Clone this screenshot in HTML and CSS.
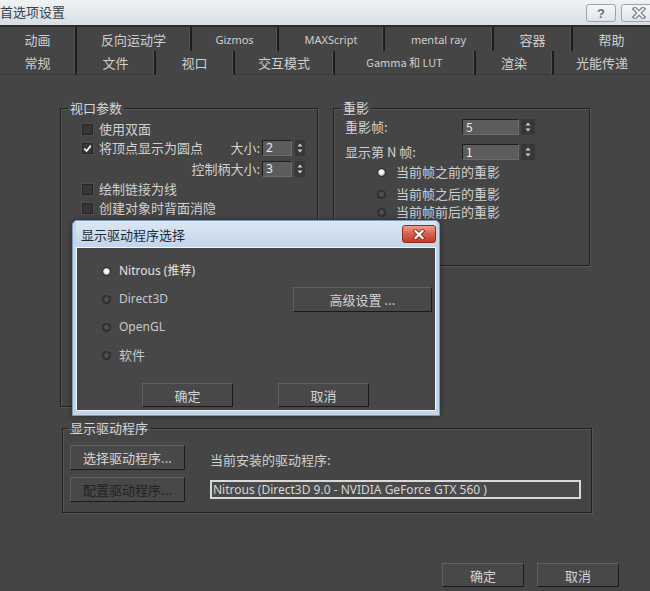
FILE: index.html
```html
<!DOCTYPE html>
<html lang="zh-CN">
<head>
<meta charset="utf-8">
<title>首选项设置</title>
<link rel="stylesheet" href="styles.css">
</head>
<body>
<div class="window">
  <header class="titlebar">
    <span class="title">首选项设置</span>
    <div class="tb-btns">
      <span class="tb-btn">?</span>
      <span class="tb-btn tb-close"><svg width="14" height="12" viewBox="0 0 14 12"><path d="M3 2L11 10M11 2L3 10" stroke="#7a8088" stroke-width="4.5" stroke-linecap="square"/><path d="M3 2L11 10M11 2L3 10" stroke="#f1f3f5" stroke-width="2" stroke-linecap="square"/></svg></span>
    </div>
  </header>

  <nav class="tabs">
    <div class="tabrow row1">
      <span class="tab">动画</span>
      <span class="tab">反向运动学</span>
      <span class="tab latin">Gizmos</span>
      <span class="tab latin">MAXScript</span>
      <span class="tab latin">mental ray</span>
      <span class="tab">容器</span>
      <span class="tab">帮助</span>
    </div>
    <div class="tabrow row2">
      <span class="tab">常规</span>
      <span class="tab">文件</span>
      <span class="tab active">视口</span>
      <span class="tab">交互模式</span>
      <span class="tab mixed">Gamma 和 LUT</span>
      <span class="tab">渲染</span>
      <span class="tab">光能传递</span>
    </div>
  </nav>

  <main class="content">
    <div class="groups">
      <fieldset class="group g-view">
        <legend>视口参数</legend>
        <div class="vp-body">
          <div class="vrow">
            <label class="check"><span class="box"></span>使用双面</label>
          </div>
          <div class="vrow">
            <label class="check"><span class="box"><svg width="9" height="9" viewBox="0 0 9 9"><path d="M1.2 4.6L3.6 7L7.8 1.6" stroke="#f2f2f2" stroke-width="1.8" fill="none"/></svg></span>将顶点显示为圆点</label>
            <span class="spinfield push"><span class="slabel">大小:</span><span class="num">2</span><span class="spin"><svg width="10" height="16" viewBox="0 0 10 16"><rect width="10" height="16" fill="#383838"/><path d="M2.5 6.5L5 3.5L7.5 6.5Z M2.5 9.5L5 12.5L7.5 9.5Z" fill="#d0d0d0"/></svg></span></span>
          </div>
          <div class="vrow end">
            <span class="spinfield"><span class="slabel">控制柄大小:</span><span class="num">3</span><span class="spin"><svg width="10" height="16" viewBox="0 0 10 16"><rect width="10" height="16" fill="#383838"/><path d="M2.5 6.5L5 3.5L7.5 6.5Z M2.5 9.5L5 12.5L7.5 9.5Z" fill="#d0d0d0"/></svg></span></span>
          </div>
          <div class="vrow">
            <label class="check"><span class="box"></span>绘制链接为线</label>
          </div>
          <div class="vrow">
            <label class="check"><span class="box"></span>创建对象时背面消隐</label>
          </div>
        </div>
      </fieldset>

      <fieldset class="group g-ghost">
        <legend>重影</legend>
        <div class="ghost-body">
          <div class="grow">
            <span class="glabel">重影帧:</span>
            <span class="num wide">5</span>
            <span class="spin wide"><svg width="14" height="16" viewBox="0 0 14 16"><rect width="14" height="16" fill="#383838"/><path d="M4.5 6.5L7 3.5L9.5 6.5Z M4.5 9.5L7 12.5L9.5 9.5Z" fill="#d0d0d0"/></svg></span>
          </div>
          <div class="grow">
            <span class="glabel">显示第 N 帧:</span>
            <span class="num wide">1</span>
            <span class="spin wide"><svg width="14" height="16" viewBox="0 0 14 16"><rect width="14" height="16" fill="#383838"/><path d="M4.5 6.5L7 3.5L9.5 6.5Z M4.5 9.5L7 12.5L9.5 9.5Z" fill="#d0d0d0"/></svg></span>
          </div>
          <label class="grow radio-row"><span class="radio on"></span>当前帧之前的重影</label>
          <label class="grow radio-row"><span class="radio"></span>当前帧之后的重影</label>
          <label class="grow radio-row"><span class="radio"></span>当前帧前后的重影</label>
        </div>
      </fieldset>
    </div>

    <fieldset class="group g-driver">
      <legend>显示驱动程序</legend>
      <div class="drv-body">
        <button class="btn">选择驱动程序...</button>
        <span class="drv-label">当前安装的驱动程序:</span>
        <button class="btn disabled">配置驱动程序...</button>
        <span class="field">Nitrous (Direct3D 9.0 - NVIDIA GeForce GTX 560 )</span>
      </div>
    </fieldset>

    <div class="footer">
      <button class="btn">确定</button>
      <button class="btn">取消</button>
    </div>
  </main>

  <div class="dialog">
    <div class="dlg-title">
      <span>显示驱动程序选择</span>
      <span class="dlg-close"><svg width="14" height="11" viewBox="0 0 14 11"><path d="M3.5 2L10.5 9M10.5 2L3.5 9" stroke="#8a2a1d" stroke-width="4" stroke-linecap="square"/><path d="M3.5 2L10.5 9M10.5 2L3.5 9" stroke="#ffffff" stroke-width="2.2" stroke-linecap="square"/></svg></span>
    </div>
    <div class="dlg-body">
      <label class="drow r1 bright"><span class="radio on"></span>Nitrous (推荐)</label>
      <label class="drow r2"><span class="radio"></span>Direct3D</label>
      <label class="drow r3"><span class="radio"></span>OpenGL</label>
      <label class="drow r4"><span class="radio"></span>软件</label>
      <button class="btn btn-adv">高级设置 ...</button>
      <div class="dlg-actions">
        <button class="btn">确定</button>
        <button class="btn">取消</button>
      </div>
    </div>
  </div>
</div>
</body>
</html>
```

FILE: styles.css
```css
* { box-sizing: border-box; }

body {
  margin: 0;
  background: #454545;
  font-family: "Noto Sans", "Noto Sans CJK SC", sans-serif;
  font-size: 13px;
  color: #d0d0d0;
}

.window {
  position: relative;
  width: 650px;
  height: 591px;
  background: #454545;
  overflow: hidden;
}

/* title bar */
.titlebar {
  height: 27px;
  display: flex;
  justify-content: space-between;
  align-items: flex-start;
  background: linear-gradient(#f0f3f6, #d8dee4);
  border-bottom: 2px solid #2c2c2c;
}
.title {
  font-family: "Noto Sans CJK SC", sans-serif;
  font-size: 13px;
  line-height: 18px;
  padding-top: 3px;
  color: #3a3f45;
}
.tb-btns {
  display: flex;
  gap: 5px;
  padding-top: 4px;
  margin-right: -6px;
}
.tb-btn {
  width: 30px;
  height: 18px;
  display: flex;
  align-items: center;
  justify-content: center;
  border: 1px solid #9ba4ad;
  border-radius: 3px;
  background: linear-gradient(#f6f7f9, #dfe4e9);
  font-family: "Liberation Sans", sans-serif;
  font-size: 13px;
  font-weight: bold;
  color: #6a7078;
}
.tb-close { width: 35px; }

/* tabs */
.tabrow {
  display: grid;
  height: 24px;
}
.row1 { grid-template-columns: 77px 115px 87px 106px 109px 79px 1fr; }
.row2 { grid-template-columns: 77px 79px 79px 100px 141px 78px 1fr; }
.tab {
  display: flex;
  align-items: center;
  justify-content: center;
  font-family: "Noto Sans CJK SC", sans-serif;
  font-size: 13px;
  line-height: 1;
  color: #cfcfcf;
  border-right: 2px solid #1d1d1d;
  box-shadow: inset -1px 0 0 #555;
}
.tab:last-child { border-right: 0; box-shadow: none; }
.tab.latin { font-family: "Noto Sans", sans-serif; font-size: 11px; }
.tab.mixed { font-size: 11px; }
.row2 .tab { border-bottom: 1px solid #3a3a3a; }
.row2 .tab.active { border-bottom-color: transparent; }

/* content */
.content {
  padding-top: 25px;
}
.groups {
  display: flex;
  align-items: flex-start;
  gap: 15px;
  padding-left: 60px;
}
.group {
  margin: 0;
  padding: 0;
  min-width: 0;
  border: 1px solid #222;
  box-shadow: 1px 1px 0 #575757, inset 1px 1px 0 #575757;
}
.group legend {
  margin-left: 7px;
  padding: 0 2px;
  font-family: "Noto Sans CJK SC", sans-serif;
  font-size: 13px;
  line-height: 16px;
  color: #d6d6d6;
}

.g-view {
  width: 258px;
  height: 307px;
}
.vp-body {
  display: grid;
  grid-template-rows: 18px 20px 22px 18px 20px;
  padding: 4px 12px 0 21px;
}
.vrow {
  display: flex;
  align-items: center;
}
.vrow.end { justify-content: flex-end; }
.check {
  display: flex;
  align-items: center;
  gap: 6px;
  font-family: "Noto Sans CJK SC", sans-serif;
  line-height: 16px;
}
.box {
  width: 11px;
  height: 11px;
  display: flex;
  align-items: center;
  justify-content: center;
  background: #363636;
  border: 1px solid #262626;
  box-shadow: 0 0 0 1px #4e4e4e;
}
.spinfield {
  display: flex;
  align-items: center;
}
.spinfield.push { margin-left: auto; }
.slabel {
  font-family: "Noto Sans CJK SC", sans-serif;
  line-height: 16px;
  margin-right: 2px;
}
.num {
  width: 30px;
  height: 16px;
  padding-left: 3px;
  background: #5c5c5c;
  border-top: 1px solid #1e1e1e;
  border-left: 1px solid #1e1e1e;
  border-bottom: 1px solid #6c6c6c;
  border-right: 1px solid #6c6c6c;
  font-size: 12px;
  line-height: 14px;
  color: #ececec;
}
.num.wide { width: 57px; }
.spin {
  display: flex;
  margin-left: 3px;
}
.spin.wide { margin-left: 2px; }

.g-ghost {
  width: 257px;
  height: 166px;
}
.ghost-body {
  display: flex;
  flex-direction: column;
  padding: 2px 11px 0 11px;
}
.grow {
  display: flex;
  align-items: center;
  height: 18px;
  font-family: "Noto Sans CJK SC", sans-serif;
  line-height: 16px;
}
.ghost-body > :nth-child(2) { margin-top: 7px; }
.ghost-body > :nth-child(3) { margin-top: 2px; }
.ghost-body > :nth-child(4) { margin-top: 4px; }
.glabel { width: 117px; }
.radio-row {
  padding-left: 32px;
  gap: 10px;
}
.radio {
  width: 9px;
  height: 9px;
  flex: none;
  border-radius: 50%;
  background: radial-gradient(circle at 50% 45%, #5a5a5a, #333 80%);
  border: 1px solid #252525;
}
.radio.on {
  background: radial-gradient(circle at 50% 45%, #ffffff 0 30%, #c9c9c9 55%, #7a7a7a 100%);
}

/* driver group */
.g-driver {
  width: 530px;
  height: 93px;
  margin: 13px 0 0 62px;
}
.g-driver legend { margin-left: 5px; }
.drv-body {
  display: grid;
  grid-template-columns: 115px 1fr;
  grid-template-rows: 25px 25px;
  column-gap: 25px;
  row-gap: 7px;
  padding: 9px 10px 0 7px;
}
.drv-label {
  align-self: center;
  padding-top: 4px;
  font-family: "Noto Sans CJK SC", sans-serif;
  line-height: 16px;
}
.field {
  align-self: center;
  height: 19px;
  border: 2px solid #d9d9d9;
  background: #4a4a4a;
  padding-left: 1px;
  font-size: 12px;
  line-height: 15px;
  color: #d6d6d6;
  white-space: nowrap;
  overflow: hidden;
}

/* buttons */
.btn {
  display: flex;
  align-items: center;
  justify-content: center;
  height: 24px;
  padding: 0;
  margin: 0;
  background: #484848;
  border: 1px solid;
  border-color: #606060 #1b1b1b #1b1b1b #606060;
  font-family: "Noto Sans CJK SC", sans-serif;
  font-size: 13px;
  color: #d4d4d4;
}
.drv-body .btn { height: 25px; }
.drv-body .btn.disabled { color: #222; }

.footer {
  display: flex;
  justify-content: flex-end;
  gap: 13px;
  padding-right: 31px;
  margin-top: 50px;
}
.footer .btn { width: 82px; }

/* dialog */
.dialog {
  position: absolute;
  left: 72px;
  top: 220px;
  width: 368px;
  height: 196px;
  display: flex;
  flex-direction: column;
  padding: 0 3px 4px 3px;
  background: #c2d5e9;
  border: 1px solid #7f9ab6;
  border-radius: 5px 5px 0 0;
  box-shadow: 0 0 5px rgba(0, 0, 0, 0.45);
}
.dlg-title {
  height: 26px;
  flex: none;
  display: flex;
  align-items: center;
  justify-content: space-between;
  padding-left: 5px;
  background: linear-gradient(#dbe7f3, #c2d5e9);
  font-family: "Noto Sans CJK SC", sans-serif;
  font-size: 13px;
  color: #1d2a38;
}
.dlg-close {
  width: 34px;
  height: 18px;
  display: flex;
  align-items: center;
  justify-content: center;
  border: 1px solid #8e2b1c;
  border-radius: 3px;
  background: linear-gradient(#eaa08f, #d85f48 50%, #c23d28);
}
.dlg-body {
  flex: 1;
  display: grid;
  grid-template-columns: 1fr 139px;
  grid-template-rows: repeat(4, 28px) auto;
  padding: 9px 3px 0 25px;
  background: #474747;
  border: 1px solid #f2f6fa;
}
.drow {
  grid-column: 1;
  display: flex;
  align-items: center;
  gap: 8px;
  font-size: 12px;
  line-height: 16px;
  color: #c8c8c8;
}
.drow.bright { color: #e2e2e2; }
.r1 { grid-row: 1; }
.r2 { grid-row: 2; }
.r3 { grid-row: 3; }
.r4 { grid-row: 4; font-family: "Noto Sans CJK SC", sans-serif; font-size: 13px; }
.btn-adv {
  grid-column: 2;
  grid-row: 2;
  align-self: center;
  width: 139px;
  height: 25px;
}
.dlg-actions {
  grid-column: 1 / -1;
  display: flex;
  gap: 45px;
  padding-left: 40px;
  margin-top: 14px;
}
.dlg-actions .btn { width: 91px; }
```
